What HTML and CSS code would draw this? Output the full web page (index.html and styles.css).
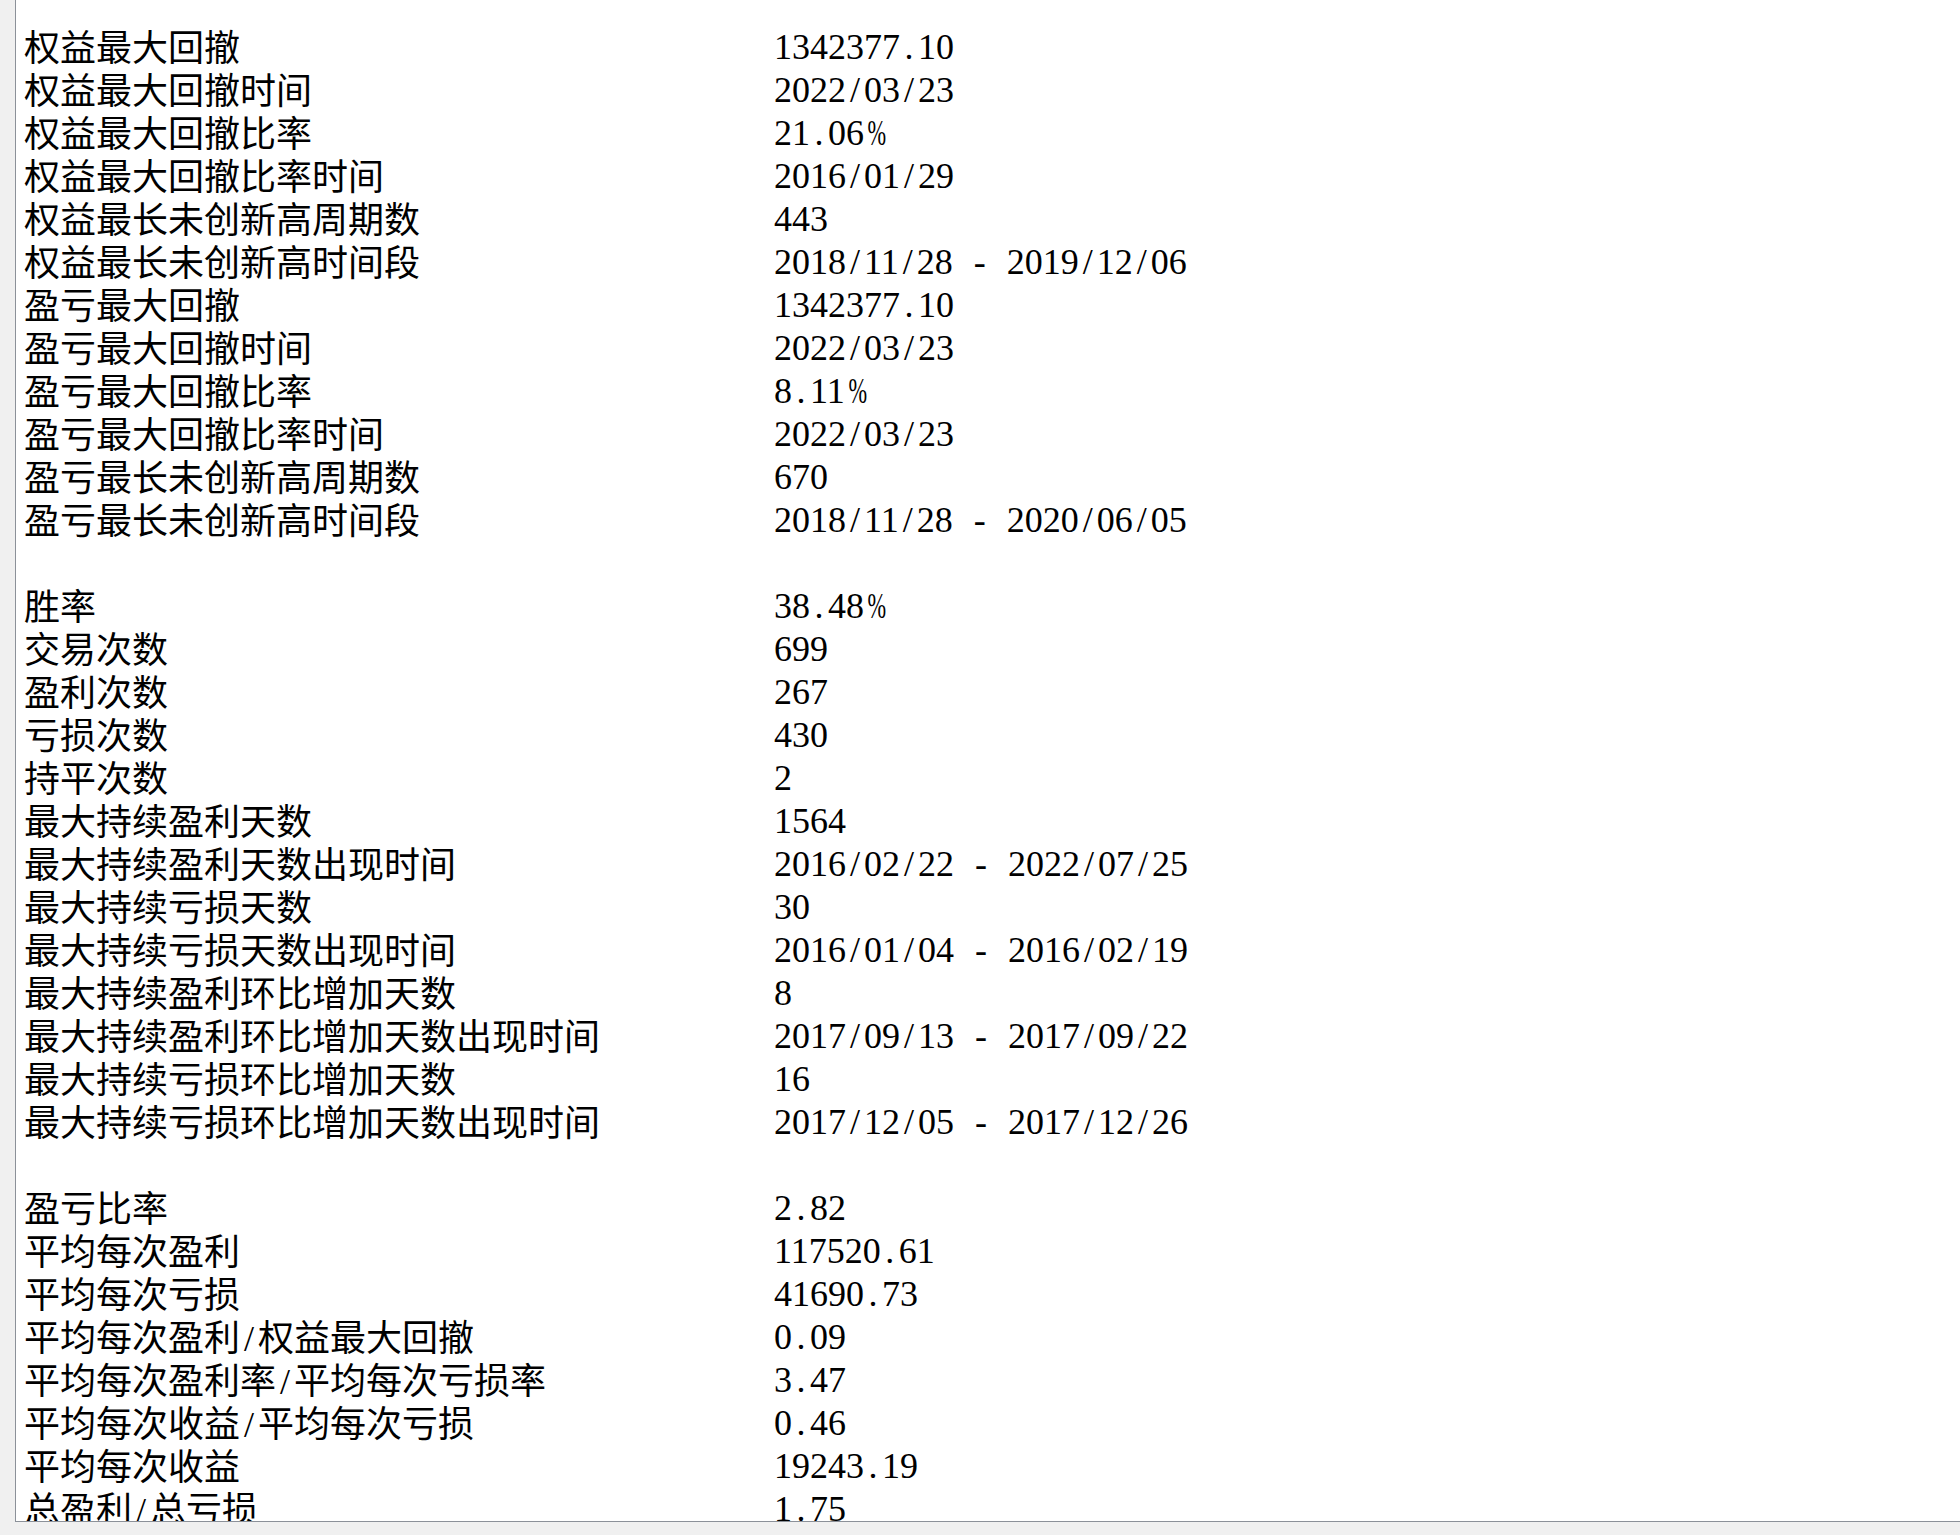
FILE: index.html
```html
<!DOCTYPE html>
<html>
<head>
    <title>回测报告</title>
    <link rel="stylesheet" href="styles.css">
</head>
<body>
    <div class="report">
        <div class="row"><div class="k">权益最大回撤</div><div class="v">1342377.10</div></div>
        <div class="row"><div class="k">权益最大回撤时间</div><div class="v">2022/03/23</div></div>
        <div class="row"><div class="k">权益最大回撤比率</div><div class="v">21.06%</div></div>
        <div class="row"><div class="k">权益最大回撤比率时间</div><div class="v">2016/01/29</div></div>
        <div class="row"><div class="k">权益最长未创新高周期数</div><div class="v">443</div></div>
        <div class="row"><div class="k">权益最长未创新高时间段</div><div class="v">2018/11/28 - 2019/12/06</div></div>
        <div class="row"><div class="k">盈亏最大回撤</div><div class="v">1342377.10</div></div>
        <div class="row"><div class="k">盈亏最大回撤时间</div><div class="v">2022/03/23</div></div>
        <div class="row"><div class="k">盈亏最大回撤比率</div><div class="v">8.11%</div></div>
        <div class="row"><div class="k">盈亏最大回撤比率时间</div><div class="v">2022/03/23</div></div>
        <div class="row"><div class="k">盈亏最长未创新高周期数</div><div class="v">670</div></div>
        <div class="row"><div class="k">盈亏最长未创新高时间段</div><div class="v">2018/11/28 - 2020/06/05</div></div>
        <div class="blank"></div>
        <div class="row"><div class="k">胜率</div><div class="v">38.48%</div></div>
        <div class="row"><div class="k">交易次数</div><div class="v">699</div></div>
        <div class="row"><div class="k">盈利次数</div><div class="v">267</div></div>
        <div class="row"><div class="k">亏损次数</div><div class="v">430</div></div>
        <div class="row"><div class="k">持平次数</div><div class="v">2</div></div>
        <div class="row"><div class="k">最大持续盈利天数</div><div class="v">1564</div></div>
        <div class="row"><div class="k">最大持续盈利天数出现时间</div><div class="v">2016/02/22 - 2022/07/25</div></div>
        <div class="row"><div class="k">最大持续亏损天数</div><div class="v">30</div></div>
        <div class="row"><div class="k">最大持续亏损天数出现时间</div><div class="v">2016/01/04 - 2016/02/19</div></div>
        <div class="row"><div class="k">最大持续盈利环比增加天数</div><div class="v">8</div></div>
        <div class="row"><div class="k">最大持续盈利环比增加天数出现时间</div><div class="v">2017/09/13 - 2017/09/22</div></div>
        <div class="row"><div class="k">最大持续亏损环比增加天数</div><div class="v">16</div></div>
        <div class="row"><div class="k">最大持续亏损环比增加天数出现时间</div><div class="v">2017/12/05 - 2017/12/26</div></div>
        <div class="blank"></div>
        <div class="row"><div class="k">盈亏比率</div><div class="v">2.82</div></div>
        <div class="row"><div class="k">平均每次盈利</div><div class="v">117520.61</div></div>
        <div class="row"><div class="k">平均每次亏损</div><div class="v">41690.73</div></div>
        <div class="row"><div class="k">平均每次盈利/权益最大回撤</div><div class="v">0.09</div></div>
        <div class="row"><div class="k">平均每次盈利率/平均每次亏损率</div><div class="v">3.47</div></div>
        <div class="row"><div class="k">平均每次收益/平均每次亏损</div><div class="v">0.46</div></div>
        <div class="row"><div class="k">平均每次收益</div><div class="v">19243.19</div></div>
        <div class="row"><div class="k">总盈利/总亏损</div><div class="v">1.75</div></div>
    </div>

    <script>
        // half-width cells for ascii punctuation, like the report font
        document.querySelectorAll('.k, .v').forEach(function(cell) {
            var out = '';
            for (var ch of cell.textContent) {
                if (/[0-9]/.test(ch) || ch.charCodeAt(0) > 127) {
                    out += ch;
                } else {
                    var cls = ch === '%' ? 'h pc' : 'h';
                    out += '<span class="' + cls + '">' + (ch === ' ' ? '&nbsp;' : ch) + '</span>';
                }
            }
            cell.innerHTML = out;
        });
    </script>
</body>
</html>
```

FILE: styles.css
```css
body {
    margin: 0;
    background-color: #f0f0f0;
    color: #000;
}

.report {
    margin-left: 15px;
    height: 1495px;
    overflow: hidden;
    background-color: #fff;
    border-left: 1px solid #8c9199;
    border-bottom: 1px solid #8c9199;
    padding: 26px 0 0 8px;
}

.row {
    display: flex;
    height: 43px;
}

.blank {
    height: 43px;
}

.k {
    width: 750px;
    flex-shrink: 0;
    font-family: "Noto Sans CJK SC", sans-serif;
    font-size: 36px;
    line-height: 43px;
    white-space: nowrap;
    position: relative;
    top: -2px;
}

.v {
    font-family: "Liberation Serif", serif;
    font-size: 36px;
    line-height: 43px;
    white-space: nowrap;
}

.h {
    display: inline-block;
    width: 18px;
    text-align: center;
    font-family: "Liberation Serif", serif;
}

.pc {
    transform: scaleX(0.62);
}
```
